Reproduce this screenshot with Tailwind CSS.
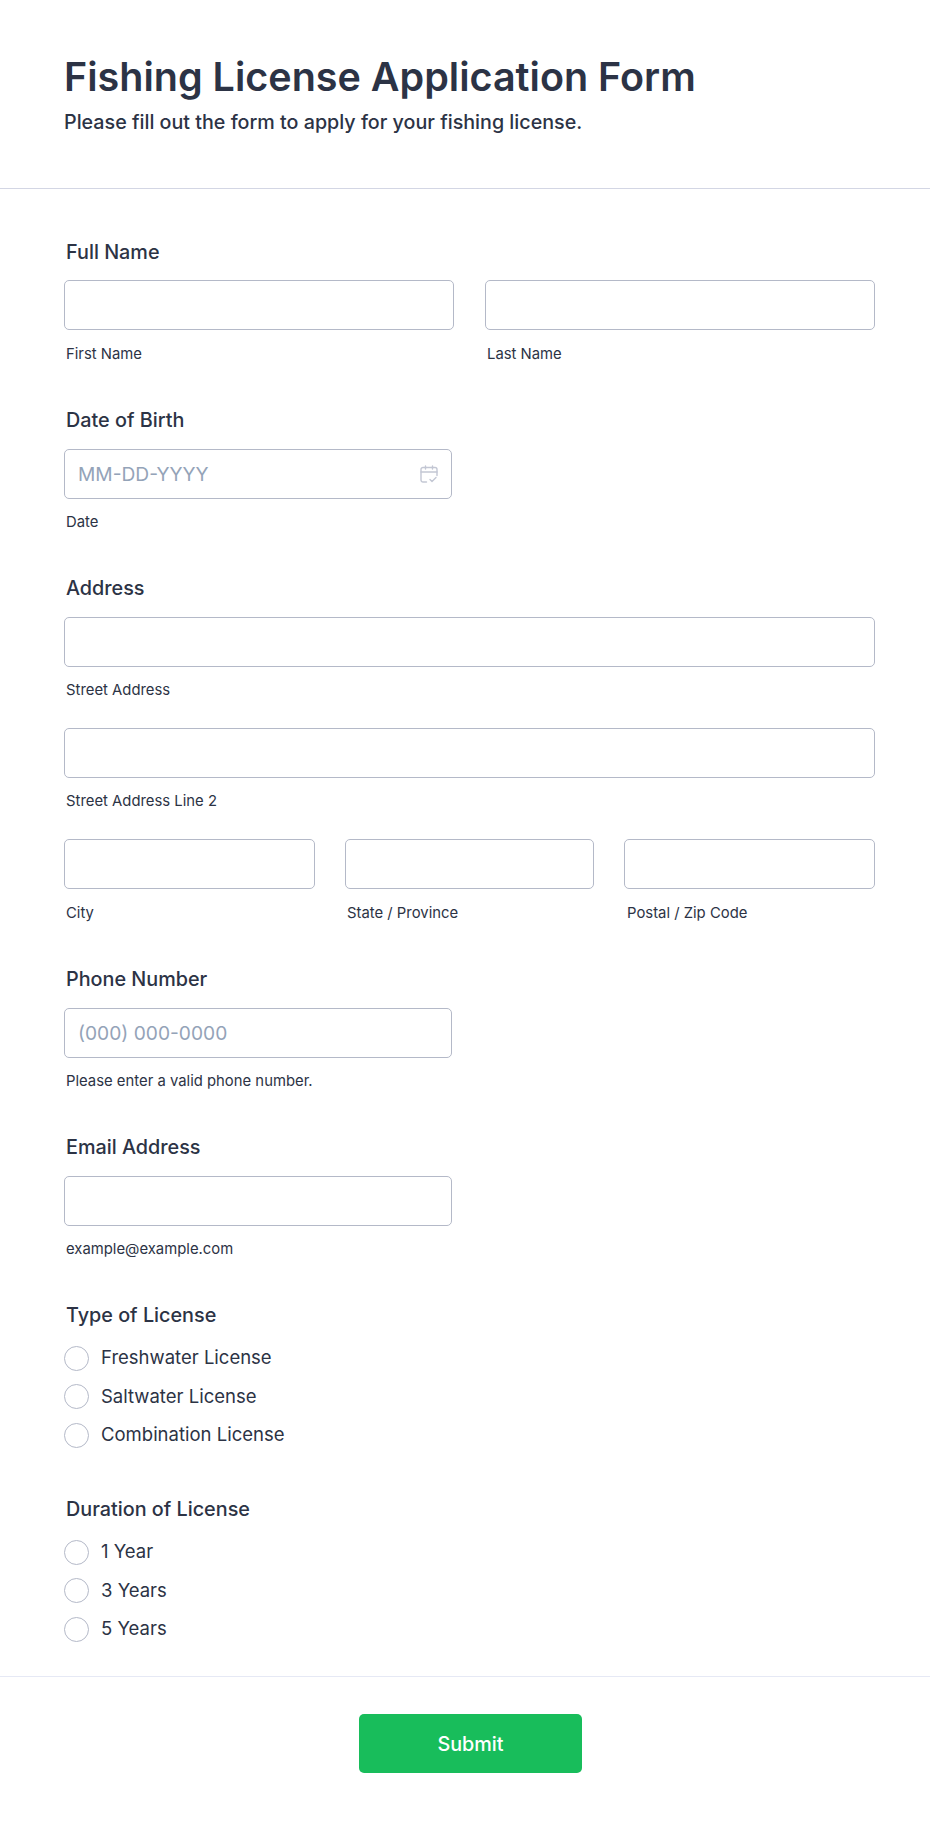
<!DOCTYPE html>
<html lang="en">
<head>
    <meta charset="UTF-8">
    <meta name="viewport" content="width=device-width, initial-scale=1.0">
    <title>Fishing License Application Form</title>
    <script src="https://cdn.jsdelivr.net/npm/@tailwindcss/browser@4"></script>
</head>
<body class="bg-white font-['Inter',sans-serif] text-[#2c3345]">
    <header class="h-[189px] border-b border-[#d3d6e4] pl-[64px] pt-[51px]">
        <h1 class="text-[39.5px] leading-[52px] font-semibold">Fishing License Application Form</h1>
        <p class="mt-[6px] text-[19.7px] leading-[26px] font-medium">Please fill out the form to apply for your fishing license.</p>
    </header>

    <form class="pl-[64px] pr-[55px] pt-[51px]">
        <!-- full name -->
        <section class="h-[168px]">
            <h2 class="pl-[2px] text-[19.8px] leading-6 font-medium">Full Name</h2>
            <div class="mt-[16px] grid grid-cols-2 gap-[31px]">
                <div>
                    <input type="text" class="h-[50px] w-full rounded-[5px] border border-[#b4b9c8] bg-white">
                    <p class="mt-[15px] pl-[2px] text-[14.85px] leading-[18px]">First Name</p>
                </div>
                <div>
                    <input type="text" class="h-[50px] w-full rounded-[5px] border border-[#b4b9c8] bg-white">
                    <p class="mt-[15px] pl-[2px] text-[14.85px] leading-[18px]">Last Name</p>
                </div>
            </div>
        </section>

        <!-- date -->
        <section class="h-[168px]">
            <h2 class="pl-[2px] text-[19.8px] leading-6 font-medium">Date of Birth</h2>
            <div class="relative mt-[17px] w-[388px]">
                <input type="text" placeholder="MM-DD-YYYY" class="h-[50px] w-full rounded-[5px] border border-[#b4b9c8] bg-white px-[13px] text-[19.2px] placeholder:text-[#94a3b8]">
                <svg class="absolute right-[14px] top-[16px] text-[#c3c7d4]" width="18" height="18" viewBox="0 0 18 18" fill="none" stroke="currentColor" stroke-width="1.4" stroke-linecap="round" stroke-linejoin="round">
                    <path d="M6.5 17H3a2 2 0 0 1-2-2V4.5a2 2 0 0 1 2-2h12a2 2 0 0 1 2 2v6"/>
                    <path d="M1 7h16M5.5 1v3M12.5 1v3"/>
                    <path d="M10 14.5l2 2 4-4"/>
                </svg>
                <p class="mt-[14px] pl-[2px] text-[14.85px] leading-[18px]">Date</p>
            </div>
        </section>

        <!-- address -->
        <section class="h-[391px]">
            <h2 class="pl-[2px] text-[19.8px] leading-6 font-medium">Address</h2>
            <div class="mt-[17px]">
                <input type="text" class="h-[50px] w-full rounded-[5px] border border-[#b4b9c8] bg-white">
                <p class="mt-[14px] pl-[2px] text-[14.85px] leading-[18px]">Street Address</p>
            </div>
            <div class="mt-[29px]">
                <input type="text" class="h-[50px] w-full rounded-[5px] border border-[#b4b9c8] bg-white">
                <p class="mt-[14px] pl-[2px] text-[14.85px] leading-[18px]">Street Address Line 2</p>
            </div>
            <div class="mt-[29px] grid grid-cols-[251px_249px_251px] gap-[30px]">
                <div>
                    <input type="text" class="h-[50px] w-full rounded-[5px] border border-[#b4b9c8] bg-white">
                    <p class="mt-[15px] pl-[2px] text-[14.85px] leading-[18px]">City</p>
                </div>
                <div>
                    <input type="text" class="h-[50px] w-full rounded-[5px] border border-[#b4b9c8] bg-white">
                    <p class="mt-[15px] pl-[2px] text-[14.85px] leading-[18px]">State / Province</p>
                </div>
                <div>
                    <input type="text" class="h-[50px] w-full rounded-[5px] border border-[#b4b9c8] bg-white">
                    <p class="mt-[15px] pl-[3px] text-[14.85px] leading-[18px]">Postal / Zip Code</p>
                </div>
            </div>
        </section>

        <!-- phone -->
        <section class="h-[168px]">
            <h2 class="pl-[2px] text-[19.8px] leading-6 font-medium">Phone Number</h2>
            <div class="mt-[17px] w-[388px]">
                <input type="text" placeholder="(000) 000-0000" class="h-[50px] w-full rounded-[5px] border border-[#b4b9c8] bg-white px-[13px] text-[19.2px] placeholder:text-[#94a3b8]">
                <p class="mt-[14px] pl-[2px] text-[14.85px] leading-[18px]">Please enter a valid phone number.</p>
            </div>
        </section>

        <!-- email -->
        <section class="h-[168px]">
            <h2 class="pl-[2px] text-[19.8px] leading-6 font-medium">Email Address</h2>
            <div class="mt-[17px] w-[388px]">
                <input type="text" class="h-[50px] w-full rounded-[5px] border border-[#b4b9c8] bg-white">
                <p class="mt-[14px] pl-[2px] text-[14.85px] leading-[18px]">example@example.com</p>
            </div>
        </section>

        <!-- license type -->
        <section class="h-[194px]">
            <h2 class="pl-[2px] text-[19.8px] leading-6 font-medium">Type of License</h2>
            <div class="mt-[18px] flex flex-col gap-[12.5px]">
                <label class="flex h-[26px] items-center gap-3 text-[18.5px]"><span class="size-[25px] rounded-full border border-[#b4b9c8]"></span>Freshwater License</label>
                <label class="flex h-[26px] items-center gap-3 text-[18.5px]"><span class="size-[25px] rounded-full border border-[#b4b9c8]"></span>Saltwater License</label>
                <label class="flex h-[26px] items-center gap-3 text-[18.5px]"><span class="size-[25px] rounded-full border border-[#b4b9c8]"></span>Combination License</label>
            </div>
        </section>

        <!-- duration -->
        <section>
            <h2 class="pl-[2px] text-[19.8px] leading-6 font-medium">Duration of License</h2>
            <div class="mt-[18px] flex flex-col gap-[12.5px]">
                <label class="flex h-[26px] items-center gap-3 text-[18.5px]"><span class="size-[25px] rounded-full border border-[#b4b9c8]"></span>1 Year</label>
                <label class="flex h-[26px] items-center gap-3 text-[18.5px]"><span class="size-[25px] rounded-full border border-[#b4b9c8]"></span>3 Years</label>
                <label class="flex h-[26px] items-center gap-3 text-[18.5px]"><span class="size-[25px] rounded-full border border-[#b4b9c8]"></span>5 Years</label>
            </div>
        </section>
    </form>

    <div class="mt-[34px] flex justify-center border-t border-[#e6e9f5] pl-[11px] pt-[37px]">
        <button type="button" class="h-[59px] w-[223px] rounded-[5px] bg-[#18bd5b] pt-[2px] text-[19.8px] font-medium text-white">Submit</button>
    </div>
</body>
</html>
